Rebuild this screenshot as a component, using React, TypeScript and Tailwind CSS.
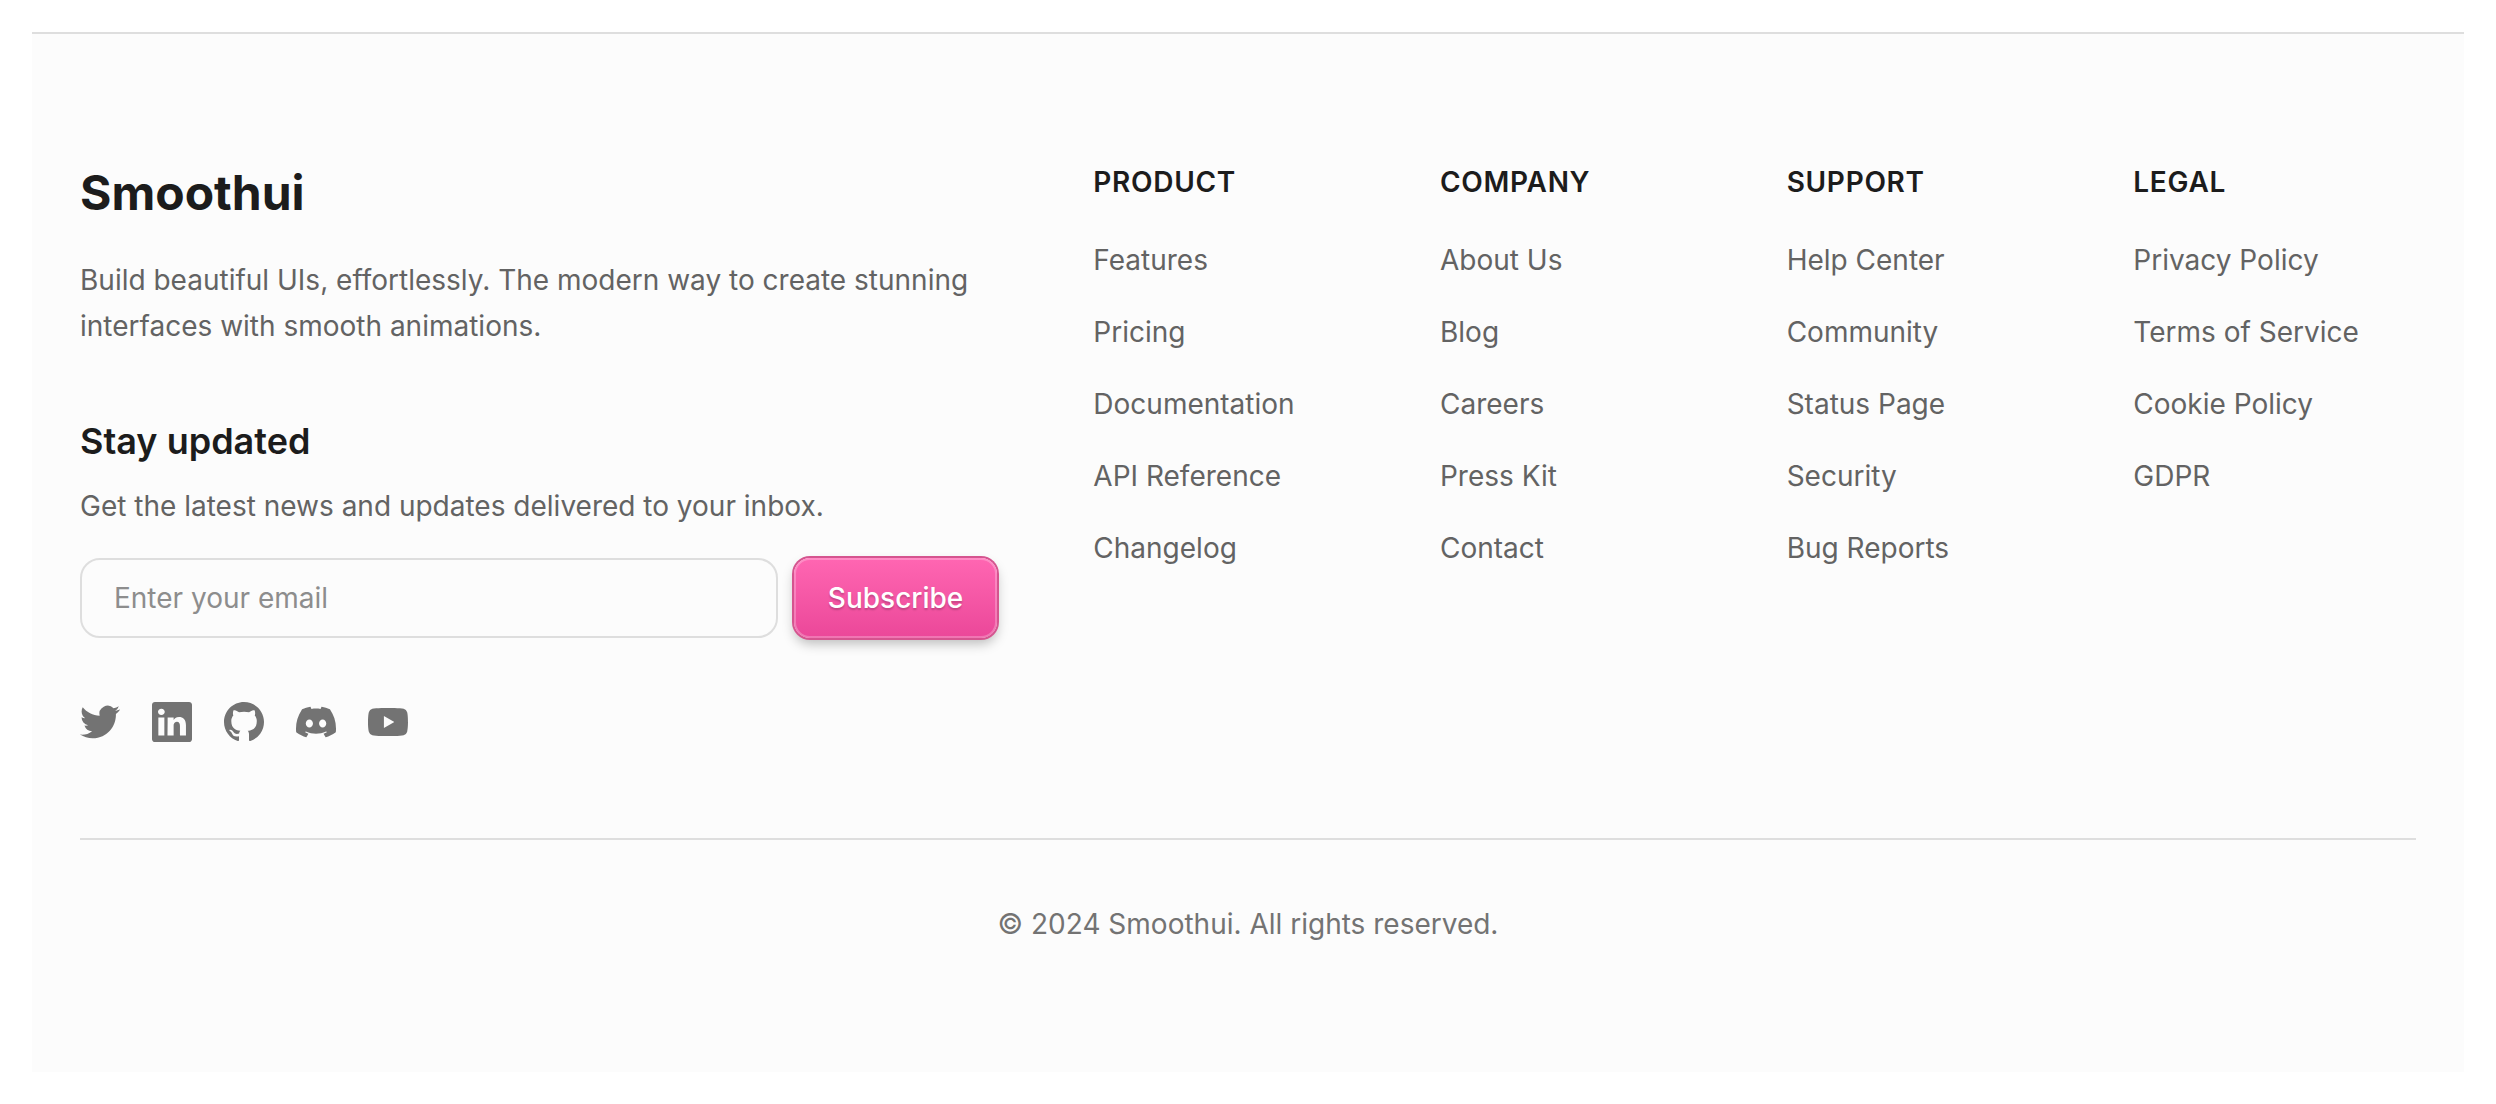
import { BsGithub, BsLinkedin } from 'react-icons/bs'
import { SiDiscord, SiYoutube } from 'react-icons/si'

interface LinkGroup {
  title: string
  links: string[]
}

const linkGroups: LinkGroup[] = [
  { title: 'Product', links: ['Features', 'Pricing', 'Documentation', 'API Reference', 'Changelog'] },
  { title: 'Company', links: ['About Us', 'Blog', 'Careers', 'Press Kit', 'Contact'] },
  { title: 'Support', links: ['Help Center', 'Community', 'Status Page', 'Security', 'Bug Reports'] },
  { title: 'Legal', links: ['Privacy Policy', 'Terms of Service', 'Cookie Policy', 'GDPR'] },
]

function TwitterIcon({ className }: { className?: string }) {
  return (
    <svg className={className} viewBox="0 0 24 24" fill="currentColor" aria-hidden="true">
      <path d="M23.953 4.57a10 10 0 01-2.825.775 4.958 4.958 0 002.163-2.723c-.951.555-2.005.959-3.127 1.184a4.92 4.92 0 00-8.384 4.482C7.69 8.095 4.067 6.13 1.64 3.162a4.822 4.822 0 00-.666 2.475c0 1.71.87 3.213 2.188 4.096a4.904 4.904 0 01-2.228-.616v.06a4.923 4.923 0 003.946 4.827 4.996 4.996 0 01-2.212.085 4.936 4.936 0 004.604 3.417 9.867 9.867 0 01-6.102 2.105c-.39 0-.779-.023-1.17-.067a13.995 13.995 0 007.557 2.209c9.053 0 13.998-7.496 13.998-13.985 0-.21 0-.42-.015-.63A9.935 9.935 0 0024 4.59z" />
    </svg>
  )
}

const socials = [
  { name: 'Twitter', icon: TwitterIcon },
  { name: 'LinkedIn', icon: BsLinkedin },
  { name: 'GitHub', icon: BsGithub },
  { name: 'Discord', icon: SiDiscord },
  { name: 'YouTube', icon: SiYoutube },
]

function Newsletter() {
  return (
    <div className="mt-16">
      <h3 className="text-4xl leading-[56px] font-semibold text-[#1c1c1c]">Stay updated</h3>
      <p className="mt-[17px] text-[#636363]">Get the latest news and updates delivered to your inbox.</p>
      <form className="mt-8 flex gap-4" onSubmit={(e) => e.preventDefault()}>
        <input
          type="email"
          aria-label="Email address"
          placeholder="Enter your email"
          className="h-20 min-w-0 flex-1 rounded-[20px] border-2 border-[#dedede] bg-[#fcfcfc] px-8 placeholder:text-[#8d8d8d]"
        />
        <button
          type="submit"
          className="h-20 rounded-2xl bg-linear-to-b from-[#ff66b2] to-[#eb4799] px-[34px] font-medium text-white shadow-[inset_0_0_0_2px_rgba(255,255,255,0.25),0_0_0_2px_#d5548f,0_6px_12px_rgba(0,0,0,0.25)] text-shadow-[0_2px_2px_rgba(0,0,0,0.2)]"
        >
          Subscribe
        </button>
      </form>
    </div>
  )
}

export default function App() {
  return (
    <div className="bg-white p-8 font-['Inter',sans-serif] text-[28px] leading-10">
      <footer className="border-t-2 border-[#dedede] bg-[#fcfcfc] px-12 py-32">
        <div className="grid grid-cols-[43fr_62fr] gap-24">
          <div>
            <h2 className="text-5xl leading-[62px] font-bold text-[#1c1c1c]">Smoothui</h2>
            <p className="mt-[33px] leading-[46px] text-[#636363]">
              Build beautiful UIs, effortlessly. The modern way to create stunning interfaces with smooth animations.
            </p>
            <Newsletter />
            <div className="mt-16 flex gap-8">
              {socials.map(({ name, icon: Icon }) => (
                <a key={name} href="#" aria-label={name} className="text-[#737373]">
                  <Icon className="size-10" />
                </a>
              ))}
            </div>
          </div>

          <nav className="grid grid-cols-4 gap-16">
            {linkGroups.map((group) => (
              <div key={group.title}>
                <h3 className="font-semibold tracking-wide text-[#1c1c1c] uppercase">{group.title}</h3>
                <ul className="mt-[38px] space-y-8">
                  {group.links.map((link) => (
                    <li key={link}>
                      <a href="#" className="text-[#636363]">
                        {link}
                      </a>
                    </li>
                  ))}
                </ul>
              </div>
            ))}
          </nav>
        </div>

        <div className="mt-24 border-t-2 border-[#dedede] pt-16 text-center text-[#737373]">
          <p>© 2024 Smoothui. All rights reserved.</p>
        </div>
      </footer>
    </div>
  )
}
